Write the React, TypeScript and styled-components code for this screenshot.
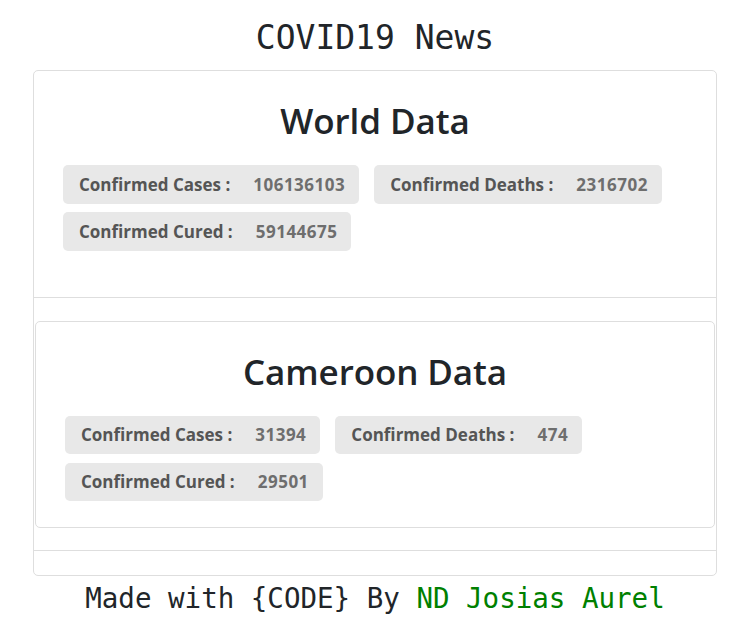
import React from "react";
import styled, { createGlobalStyle } from "styled-components";

const GlobalStyle = createGlobalStyle`
  html, body { margin: 0; padding: 0; background: #ffffff; }
  body {
    font-family: "Open Sans", "Noto Sans", sans-serif;
    color: #212529;
  }
`;

const Page = styled.div`
  width: 684px;
  margin-left: 33px;
  display: flex;
  flex-direction: column;
`;

const Title = styled.h1`
  margin: 0;
  padding-top: 19px;
  height: 70px;
  box-sizing: border-box;
  font-family: "DejaVu Sans Mono", monospace;
  font-weight: 400;
  font-size: 33px;
  line-height: 38px;
  text-align: center;
  color: #212529;
`;

const Card = styled.div`
  border: 1px solid #dedede;
  border-radius: 5px;
  display: flex;
  flex-direction: column;
`;

const Section = styled.section<{ $bottom: number }>`
  padding: 26px 29px ${(p) => p.$bottom}px;
  display: flex;
  flex-direction: column;
`;

const Middle = styled.div`
  border-top: 1px solid #dedede;
  border-bottom: 1px solid #dedede;
  padding: 23px 1px 22px;
`;

const InnerCard = styled.div`
  border: 1px solid #dedede;
  border-radius: 5px;
`;

const Spacer = styled.div`
  height: 24px;
`;

const Heading = styled.h2`
  margin: 0 0 20px;
  font-size: 35px;
  line-height: 48px;
  font-weight: 600;
  letter-spacing: -0.1px;
  text-align: center;
  color: #212529;
`;

const Badges = styled.div`
  display: flex;
  flex-wrap: wrap;
  gap: 8.5px 15px;
`;

const Badge = styled.div`
  display: flex;
  align-items: center;
  gap: 23px;
  height: 38.5px;
  padding: 0 14px 0 16px;
  background: #e8e8e8;
  border-radius: 5px;
  font-size: 17px;
  font-weight: 700;
`;

const Label = styled.span`
  color: #555555;
`;

const Value = styled.span`
  color: #6e6e6e;
  letter-spacing: 0.5px;
`;

const Footer = styled.p`
  margin: 0;
  padding-top: 5px;
  font-family: "DejaVu Sans Mono", monospace;
  font-size: 27.5px;
  line-height: 34px;
  text-align: center;
  color: #212529;
`;

const Author = styled.span`
  color: #008000;
`;

type Stat = { label: string; value: string };

const world: Stat[] = [
  { label: "Confirmed Cases :", value: "106136103" },
  { label: "Confirmed Deaths :", value: "2316702" },
  { label: "Confirmed Cured :", value: "59144675" },
];

const cameroon: Stat[] = [
  { label: "Confirmed Cases :", value: "31394" },
  { label: "Confirmed Deaths :", value: "474" },
  { label: "Confirmed Cured :", value: "29501" },
];

const StatList = ({ stats }: { stats: Stat[] }) => (
  <Badges>
    {stats.map((s) => (
      <Badge key={s.label}>
        <Label>{s.label}</Label>
        <Value>{s.value}</Value>
      </Badge>
    ))}
  </Badges>
);

export default function App() {
  return (
    <>
      <GlobalStyle />
      <Page>
        <Title>COVID19 News</Title>
        <Card>
          <Section $bottom={46}>
            <Heading>World Data</Heading>
            <StatList stats={world} />
          </Section>
          <Middle>
            <InnerCard>
              <Section $bottom={26}>
                <Heading>Cameroon Data</Heading>
                <StatList stats={cameroon} />
              </Section>
            </InnerCard>
          </Middle>
          <Spacer />
        </Card>
        <Footer>
          Made with {"{CODE}"} By <Author>ND Josias Aurel</Author>
        </Footer>
      </Page>
    </>
  );
}
